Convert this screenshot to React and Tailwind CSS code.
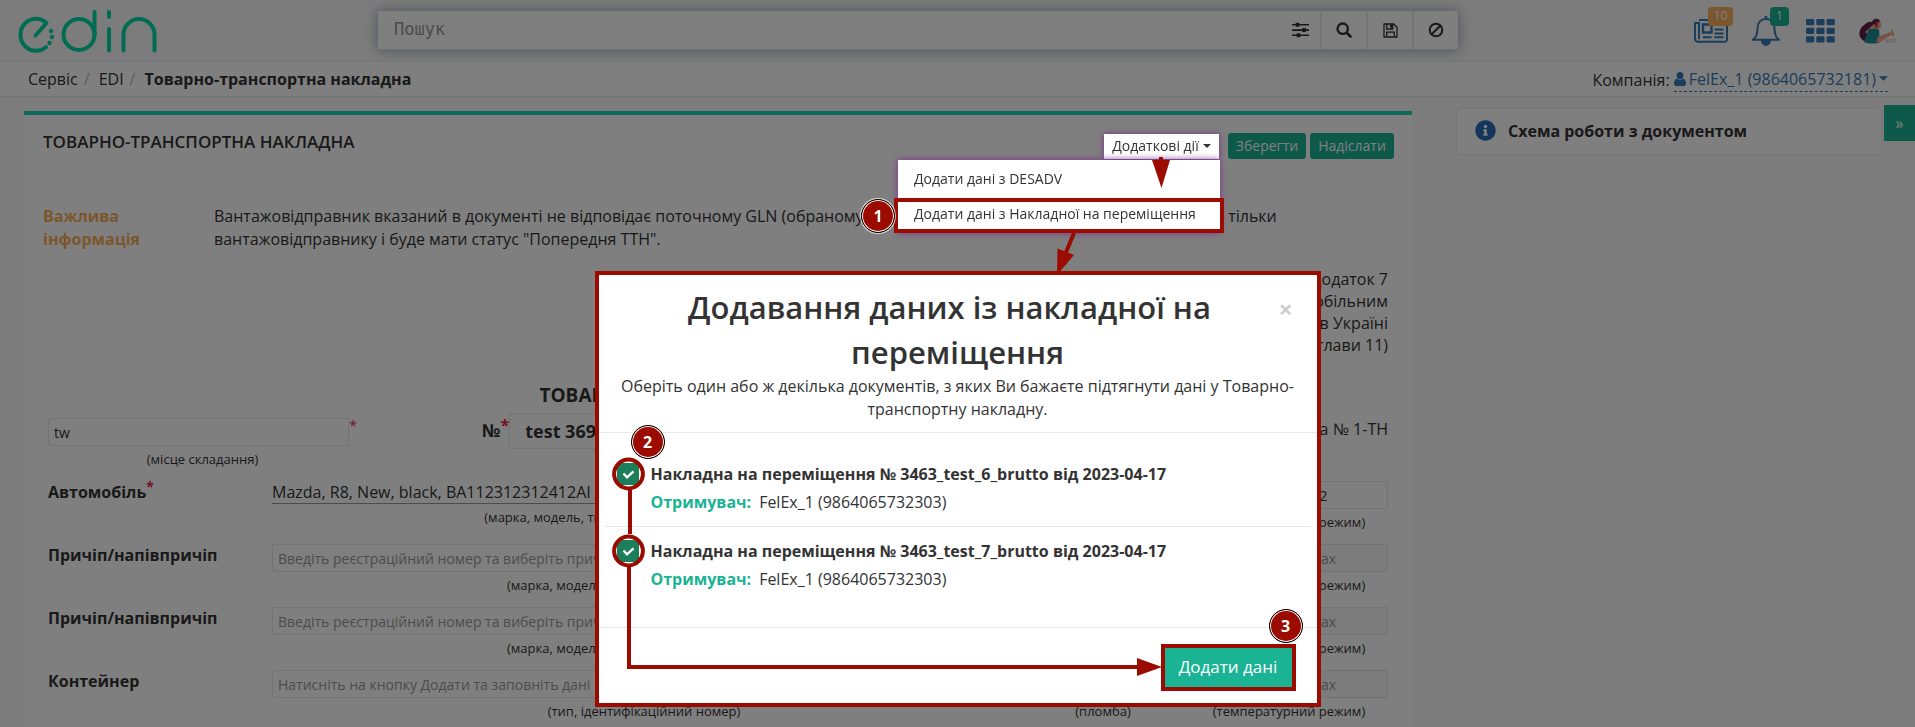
import React from 'react';
import { FaInfoCircle } from 'react-icons/fa';

function Logo() {
  return (
    <svg width="140" height="46" viewBox="0 0 140 46" fill="none" stroke="#00d8a4" strokeWidth="4" strokeLinecap="round" aria-label="edin" role="img">
      <path d="M17.5 27.5 L28.5 15 A15.5 16 0 1 0 28 39" strokeLinejoin="round" />
      <circle cx="61" cy="26.500" r="15.500" />
      <path d="M76.500 4 V27 M91 4 V9 M91 21 V42.500 M105.500 42.500 V26.500 A15.500 15.500 0 0 1 136.500 26.500 V42.500" />
      <g fill="#00d8a4" stroke="none">
        <circle cx="33" cy="23" r="2.200" />
        <circle cx="34" cy="29" r="2.200" />
        <circle cx="31.500" cy="35" r="2.200" />
      </g>
    </svg>
  );
}

function SlidersIcon() {
  return (
    <svg width="17" height="16" viewBox="0 0 17 16" aria-hidden="true" fill="#333">
      <path d="M0 2h17v1.600H0zM0 7.300h17v1.600H0zM0 12.500h17v1.600H0z" />
      <rect x="3.500" y="0.800" width="4" height="4" rx="1" />
      <rect x="10" y="6" width="4" height="4" rx="1" />
      <rect x="4.500" y="11.200" width="4" height="4" rx="1" />
    </svg>
  );
}

function SearchIcon() {
  return (
    <svg width="16" height="16" viewBox="0 0 16 16" aria-hidden="true" fill="none" stroke="#333" strokeLinecap="round">
      <circle cx="6.700" cy="6.700" r="5.200" strokeWidth="2.400" />
      <path d="M11 11l3.500 3.500" strokeWidth="2.600" />
    </svg>
  );
}

function SaveIcon() {
  return (
    <svg width="15" height="15" viewBox="0 0 15 15" aria-hidden="true" fill="none" stroke="#333" strokeWidth="1.300">
      <path d="M1 1h9.800L14 4.200V14H1z" strokeLinejoin="round" />
      <path d="M3.700 14V9.200h7.600V14M3.700 1v5h6V1" />
      <path d="M7 1.500h2v3.300H7z" fill="#333" stroke="none" />
    </svg>
  );
}

function BanIcon() {
  return (
    <svg width="16" height="16" viewBox="0 0 16 16" aria-hidden="true" fill="none" stroke="#333" strokeWidth="2">
      <circle cx="8" cy="8" r="6.300" />
      <path d="M3.700 12.300l8.600-8.600" />
    </svg>
  );
}

function NewsIcon() {
  return (
    <svg width="34" height="24" viewBox="0 0 34 24" aria-hidden="true" fill="none" stroke="#337ab7" strokeWidth="2">
      <path d="M5 1h28v19.500a2.300 2.300 0 0 1-2.300 2.300H4.200A3 3 0 0 1 1 19.800V4h4" />
      <path d="M5 3v17.200" />
      <path d="M9 5.500h8.500v8H9z" strokeWidth="2.400" />
      <path d="M20.500 6h9M20.500 10.500h9M20.500 14.500h9M9 18.200h8.500M20.500 18.200h9" />
    </svg>
  );
}

function BellIcon() {
  return (
    <svg width="28" height="30" viewBox="0 0 28 30" aria-hidden="true" fill="none" stroke="#337ab7" strokeWidth="2">
      <path d="M14 3C8.500 3 5.500 7 5.500 12.500c0 7-2 9-4.500 11.300h26c-2.500-2.300-4.500-4.300-4.500-11.300C22.500 7 19.500 3 14 3z" strokeLinejoin="round" />
      <path d="M14 0v3" strokeWidth="2.600" />
      <path d="M10 24.500a4 4.500 0 0 0 8 0z" fill="#337ab7" />
    </svg>
  );
}

function AppsIcon() {
  return (
    <svg width="29" height="24" viewBox="0 0 29 24" aria-hidden="true" fill="#337ab7">
      {[0, 8.700, 17.300].map((y) =>
        [0, 10.300, 20.600].map((x) => <rect key={x + '-' + y} x={x} y={y} width="8.200" height="6.200" rx="1.200" />)
      )}
    </svg>
  );
}

function AvatarIcon() {
  return (
    <svg width="38" height="26" viewBox="0 0 38 26" aria-hidden="true">
      <path d="M14 4C8 3 7 6 4 8c-5 4-5 12 1 15l6-3 5-9z" fill="#5c2148" />
      <path d="M17 4.500c2-2.500 5-1.500 5 1 1 3 0 5-3 6l-4-1z" fill="#f0a39a" />
      <path d="M13 5c0-4 6-6 8-2l-5 5z" fill="#5c2148" />
      <path d="M6 14l9-8 2 3-5 9z" fill="#f0a39a" />
      <path d="M10 11c3 0 8-1 10 1l1 12c-4 2-12 2-16 0l3-8z" fill="#1d8f93" />
      <path d="M19 19l12-5 3 2-13 8h-4z" fill="#f0a39a" />
      <path d="M17 4l2-1 0 6-3 1z" fill="#d0404a" />
      <path d="M33 12l1.500 6" stroke="#e0a030" strokeWidth="1.500" />
      <path d="M27 22l10-1v3H27z" fill="#ece6ee" stroke="#d9b8bd" strokeWidth=".6" />
    </svg>
  );
}

function UserIcon() {
  return (
    <svg width="12" height="14" viewBox="0 0 12 14" aria-hidden="true" fill="#337ab7" className="inline-block">
      <ellipse cx="6" cy="3.600" rx="3.400" ry="3.600" />
      <path d="M3 6.500C1 7 0 9 0 11.500 0 13 1 14 2.300 14h7.400C11 14 12 13 12 11.500 12 9 11 7 9 6.500 7.500 8.200 4.500 8.200 3 6.500z" />
    </svg>
  );
}

function Caret({ className }) {
  return (
    <svg viewBox="0 0 8 4" aria-hidden="true" className={'inline-block fill-current ' + className}>
      <path d="M0 0h8L4 4z" />
    </svg>
  );
}

function Step({ children, className }) {
  return (
    <span className={'absolute z-10 flex size-[34px] items-center justify-center rounded-full border border-black bg-[#9b0b00] text-base font-bold text-white ring-1 ring-white/70 shadow-[inset_0_0_0_1px_#fff] ' + className}>
      {children}
    </span>
  );
}

function Header() {
  const tool = 'flex w-[46px] items-center justify-center border-l-2 border-[#e7eaec]';
  return (
    <header className="flex h-[62px] items-center border-b border-[#e7eaec] bg-[#f8f8f8] px-[18px]">
      <a href="#" className="w-[360px] shrink-0"><Logo /></a>
      <form className="flex h-[39px] w-[1080px] shrink border-b border-[#ddd] bg-white shadow-[0_0_12px_#9a9fb5]">
        <input aria-label="Пошук" placeholder="Пошук" className="min-w-0 flex-1 px-4 font-['DejaVu_Sans_Mono',monospace] text-[17px] outline-none placeholder:text-[#999]" />
        <button type="button" aria-label="Фільтри" className="flex w-10 items-center justify-center"><SlidersIcon /></button>
        <button type="button" aria-label="Шукати" className={tool}><SearchIcon /></button>
        <button type="button" aria-label="Зберегти пошук" className={tool}><SaveIcon /></button>
        <button type="button" aria-label="Очистити" className={tool}><BanIcon /></button>
      </form>
      <nav className="ml-auto flex items-center gap-[26px]">
        <div className="flex items-center gap-6">
          <a href="#" aria-label="Новини" className="relative">
            <NewsIcon />
            <span className="absolute -top-3 left-3.5 flex h-[19px] w-[25px] items-center justify-center rounded bg-[#f8ac59] text-xs text-white">10</span>
          </a>
          <a href="#" aria-label="Сповіщення" className="relative">
            <BellIcon />
            <span className="absolute -top-[9px] left-[18px] flex h-[19px] w-[19px] items-center justify-center rounded bg-[#1ab394] text-xs text-white">1</span>
          </a>
        </div>
        <div className="flex items-center gap-6">
          <a href="#" aria-label="Сервіси"><AppsIcon /></a>
          <a href="#" aria-label="Профіль"><AvatarIcon /></a>
        </div>
      </nav>
    </header>
  );
}

function Breadcrumbs() {
  return (
    <div className="flex h-[35px] items-center justify-between border-b border-[#e7eaec] bg-white pr-[27px] pl-7">
      <ol className="flex">
        <li><a href="#">Сервіс</a><span className="px-1.5 text-[#bbb]">/</span></li>
        <li className="ml-[3px]"><a href="#">EDI</a><span className="px-1.5 text-[#bbb]">/</span></li>
        <li className="ml-[3px] font-bold">Товарно-транспортна накладна</li>
      </ol>
      <div>
        Компанія:{' '}
        <a href="#" className="inline-flex items-center gap-[3px] border-b border-dashed border-[#337ab7] text-[#337ab7]">
          <UserIcon />FelEx_1 (9864065732181)<Caret className="h-[5px] w-[9px]" />
        </a>
      </div>
    </div>
  );
}

function ActionsMenu() {
  return (
    <div className="relative z-20">
      <button type="button" className="flex h-[25px] w-[115px] items-center justify-center gap-1 bg-white text-sm shadow-[0_0_6px_#7b2d8b]">
        Додаткові дії<Caret className="h-1 w-2" />
      </button>
      <ul className="absolute top-[26px] -right-px w-[322px] bg-white text-sm shadow-[0_0_7px_#7b2d8b]">
        <li className="flex h-[38px] items-center px-4"><a href="#">Додати дані з DESADV</a></li>
        <li className="-mx-[4px] flex h-[35px] items-center border-4 border-[#9b0b00] bg-white px-4 pb-[3px]"><a href="#" className="whitespace-nowrap">Додати дані з Накладної на переміщення</a></li>
      </ul>
      <Step className="top-[65px] right-[324px]">1</Step>
      <svg className="absolute top-[23px] right-0 z-10 overflow-visible" width="162" height="120" viewBox="0 0 162 120" aria-hidden="true">
        <path d="M102 0h4v3h7l-8.500 28L95 3h7z" fill="#9b0b00" />
        <path d="M17 76L7 100" stroke="#9b0b00" strokeWidth="4" />
        <path d="M0 118L0.500 91.500L17 98z" fill="#9b0b00" />
      </svg>
    </div>
  );
}

function Caption({ children }) {
  return <p className="mt-1 text-center text-[13px] leading-[18px]">{children}</p>;
}

const fieldBox = 'block h-7 w-full border border-[#e5e6e7] bg-white px-[5px] text-sm placeholder:text-[#999] rounded-[2px]';
const lockedBox = 'block h-7 w-full border border-[#e5e6e7] bg-[#f8f8f8] px-[5px] text-sm placeholder:text-[#999] rounded-[2px]';

const rows = [
  { id: 'trailer1', label: 'Причіп/напівпричіп', hint: 'Введіть реєстраційний номер та виберіть причіп', caption: '(марка, модель, тип, реєстраційний номер)' },
  { id: 'trailer2', label: 'Причіп/напівпричіп', hint: 'Введіть реєстраційний номер та виберіть причіп', caption: '(марка, модель, тип, реєстраційний номер)' },
  { id: 'container', label: 'Контейнер', hint: 'Натисніть на кнопку Додати та заповніть дані', caption: '(тип, ідентифікаційний номер)', seal: true },
];

function WaybillForm() {
  return (
    <form className="px-6 pt-[17px]">
      <p className="text-right leading-[22px]">
        Додаток 7<br />до Правил перевезень вантажів автомобільним<br />транспортом в Україні<br />(пункт 11.1 глави 11)
      </p>
      <h2 className="mt-[27px] text-center text-[19px] leading-6 font-bold">ТОВАРНО-ТРАНСПОРТНА НАКЛАДНА</h2>
      <div className="mt-1.5 flex h-[68px] items-start justify-between">
        <div className="w-[309px] pt-[5px]">
          <div className="flex items-start">
            <input id="place" aria-label="Місце складання" defaultValue="tw" className={fieldBox} />
            <span className="text-sm leading-4 text-[#ed1c4a]">*</span>
          </div>
          <Caption>(місце складання)</Caption>
        </div>
        <div className="flex w-[472px] items-start">
          <label htmlFor="number" className="text-lg leading-[35px] font-bold">№</label>
          <span className="text-base leading-6 font-bold text-[#ed1c4a]">*</span>
          <input id="number" defaultValue="test 3693" className="h-9 min-w-0 flex-1 rounded-[2px] border border-[#e5e6e7] px-[15px] text-lg font-bold" />
        </div>
        <p className="w-[309px] text-right leading-8">Форма № 1-ТН</p>
      </div>
      <div className="grid h-[63px] grid-cols-[224px_1fr_198px]">
        <label htmlFor="car" className="flex items-start leading-[22px] font-bold">Автомобіль<span className="text-sm leading-3 text-[#ed1c4a]">*</span></label>
        <div className="pr-[174px]">
          <input id="car" readOnly defaultValue="Mazda, R8, New, black, BA112312312412AI" className="block h-[23px] w-full border-b border-[#999]" />
          <Caption>(марка, модель, тип та реєстраційний номер авто)</Caption>
        </div>
        <div>
          <input aria-label="Температурний режим" defaultValue="Температура від +2" className={fieldBox} />
          <Caption>(температурний режим)</Caption>
        </div>
      </div>
      {rows.map((r) => (
        <div key={r.id} className="grid h-[63px] grid-cols-[224px_1fr_174px_198px]">
          <label htmlFor={r.id} className="leading-[22px] font-bold">{r.label}</label>
          <div>
            <input id={r.id} placeholder={r.hint} className={fieldBox} />
            <Caption>{r.caption}</Caption>
          </div>
          <div>
            {r.seal && (
              <>
                <div className="px-4"><input aria-label="Пломба" className={lockedBox} /></div>
                <Caption>(пломба)</Caption>
              </>
            )}
          </div>
          <div>
            <input aria-label="Температурний режим" placeholder="Значення у градусах" className={lockedBox} />
            <Caption>(температурний режим)</Caption>
          </div>
        </div>
      ))}
    </form>
  );
}

function Document() {
  return (
    <main className="min-w-0 flex-1 border-t-4 border-[#1fd2ae] bg-white">
      <div className="flex items-start justify-between pt-[18px] pr-[18px] pl-[19px]">
        <h1 className="text-[17px] leading-[18px] font-semibold">ТОВАРНО-ТРАНСПОРТНА НАКЛАДНА</h1>
        <div className="flex items-center gap-1">
          <div className="mr-[5px]"><ActionsMenu /></div>
          <button type="button" className="h-[26px] w-[78px] rounded-[3px] bg-[#1ab394] text-sm text-white">Зберегти</button>
          <button type="button" className="h-[26px] w-[84px] rounded-[3px] bg-[#1ab394] text-sm text-white">Надіслати</button>
        </div>
      </div>
      <div className="mt-[46px] grid grid-cols-[171px_1fr] px-[19px] leading-[23px]">
        <strong className="w-[120px] text-[#f8ac59]">Важлива інформація</strong>
        <p>
          Вантажовідправник вказаний в документі не відповідає поточному GLN (обраному в системі). Ця чернетка ТТН буде відправлена тільки
          <br />вантажовідправнику і буде мати статус "Попередня ТТН".
        </p>
      </div>
      <WaybillForm />
    </main>
  );
}

function Aside() {
  return (
    <aside className="w-[424px] shrink-0">
      <h2 className="-mt-0.5 flex h-[45px] items-center gap-3 rounded bg-white px-[18px] pb-0.5 font-bold shadow-[0_0_3px_#ddd]">
        <FaInfoCircle className="size-[21px] text-[#2a6cb8]" />Схема роботи з документом
      </h2>
    </aside>
  );
}

function DocCheck({ id, label, joined }) {
  return (
    <li className={'flex h-[77px] pl-3 pt-2.5 ' + (joined ? 'border-b border-[#e7e7e7]' : '')}>
      <span className="relative mt-[3px] flex size-[22px] items-center justify-center">
        <input id={id} type="checkbox" defaultChecked className="size-[22px] appearance-none rounded-[3px] bg-[#1b7f5c]" />
        <svg className="pointer-events-none absolute inset-0 overflow-visible" width="22" height="22" viewBox="0 0 22 22" aria-hidden="true" fill="none">
          <path d="M6.500 10.500l3.500 3.800 6.500-6" stroke="#fff" strokeWidth="2.400" />
          <circle cx="11.500" cy="11" r="14.400" stroke="#9b0b00" strokeWidth="4" />
        </svg>
      </span>
      <label htmlFor={id} className="ml-3 block">
        <strong className="block leading-7">{label}</strong>
        <span className="block leading-7"><b className="mr-2 text-[#1ab394]">Отримувач:</b>FelEx_1 (9864065732303)</span>
      </label>
    </li>
  );
}

function Modal() {
  return (
    <div className="fixed inset-x-0 top-0 z-10 flex justify-center pt-[271px]">
      <div role="dialog" aria-labelledby="modal-title" className="relative w-[726px] border-4 border-[#9b0b00] bg-white">
        <div className="px-4 pt-2.5 pb-[11px] text-center">
          <button type="button" aria-label="Закрити" className="absolute top-4 right-6 text-[24px] font-bold text-[#ccc]">×</button>
          <h2 id="modal-title" className="pr-[72px] pl-14 text-[31px] leading-[45px] font-semibold">Додавання даних із накладної на</h2>
          <p className="text-[31px] leading-[45px] font-semibold">переміщення</p>
          <p className="leading-[23px]">Оберіть один або ж декілька документів, з яких Ви бажаєте підтягнути дані у Товарно-транспортну накладну.</p>
        </div>
        <ul className="border-y border-[#e7e7e7] px-1.5 pt-[17px] pb-[23px]">
          <DocCheck id="doc6" label="Накладна на переміщення № 3463_test_6_brutto від 2023-04-17" joined />
          <DocCheck id="doc7" label="Накладна на переміщення № 3463_test_7_brutto від 2023-04-17" />
        </ul>
        <div className="flex justify-end pt-4 pr-[21px] pb-3">
          <button type="button" className="h-[47px] w-[135px] border-4 border-[#9b0b00] bg-[#1ab394] pb-0.5 text-[17px] text-white">Додати дані</button>
        </div>
        <svg className="pointer-events-none absolute inset-0" width="718" height="428" viewBox="0 0 718 428" aria-hidden="true">
          <path d="M31 213v46M30 290v102h510" stroke="#9b0b00" strokeWidth="4" fill="none" />
          <path d="M538 383l25 9-25 9z" fill="#9b0b00" />
        </svg>
        <Step className="top-[150px] left-8">2</Step>
        <Step className="top-[334px] right-[14px]">3</Step>
      </div>
    </div>
  );
}

export default function App() {
  return (
    <div className="relative h-screen overflow-hidden bg-[#f8f8f8] font-['Open_Sans','Noto_Sans',sans-serif] text-base text-[#333]">
      <Header />
      <Breadcrumbs />
      <div className="flex gap-[45px] pt-3.5 pr-[34px] pl-6">
        <Document />
        <Aside />
      </div>
      <button type="button" aria-label="Показати панель" className="absolute top-[105px] right-0 h-9 w-[31px] bg-[#1ab394] text-base text-white">»</button>
      <div className="fixed inset-0 z-10 bg-black/50" />
      <Modal />
    </div>
  );
}
